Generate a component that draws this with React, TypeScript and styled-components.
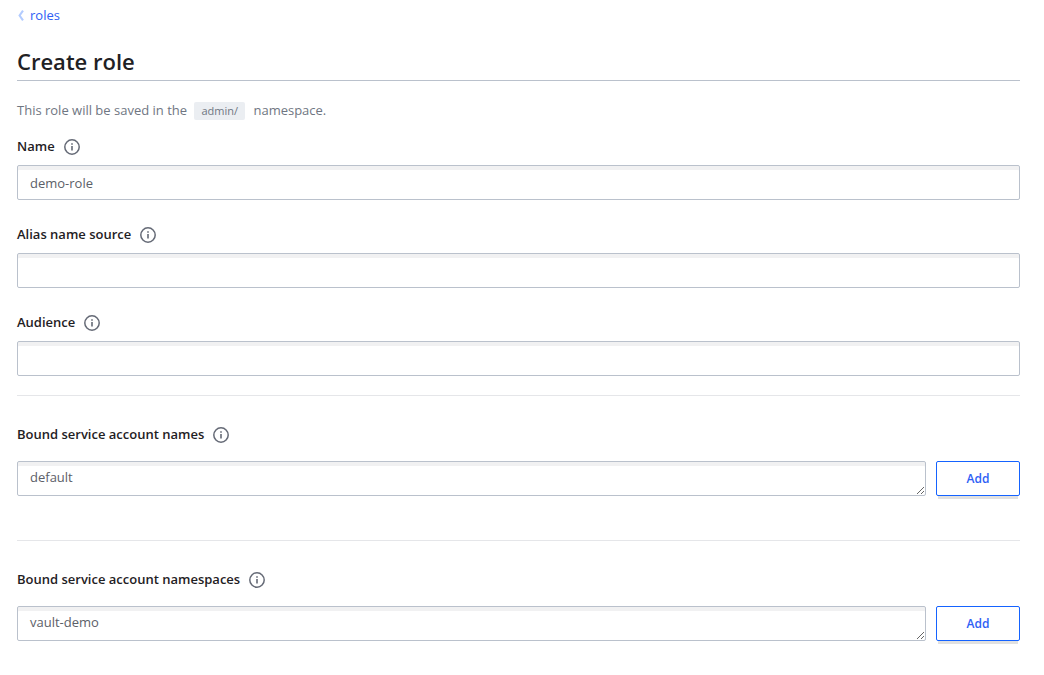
import React, { useId } from "react";
import styled, { createGlobalStyle } from "styled-components";

const GlobalStyle = createGlobalStyle`
  *, *::before, *::after { box-sizing: border-box; }
  body {
    margin: 0;
    background: #fff;
    color: #1f2124;
    font-family: "Open Sans", "Noto Sans", sans-serif;
    font-size: 13px;
    line-height: 20px;
  }
`;

const Page = styled.main`
  padding: 5px 24px 0 17px;
`;

const Breadcrumb = styled.nav`
  display: flex;
  height: 20px;
`;

const BackLink = styled.a`
  display: inline-flex;
  align-items: center;
  gap: 5px;
  color: #2e60f5;
  text-decoration: none;
`;

const Title = styled.h1`
  margin: 20px 0 0;
  padding-bottom: 3px;
  border-bottom: 1px solid #bac1cc;
  font-size: 22px;
  font-weight: 600;
  line-height: 32px;
`;

const Note = styled.p`
  margin: 19px 0 16px;
  color: #6f7682;
`;

const Code = styled.code`
  display: inline-block;
  margin: 0 5px 0 4px;
  padding: 0 7px;
  border-radius: 2px;
  background: #ebeef2;
  font-family: inherit;
  font-size: 11px;
  line-height: 18px;
`;

const Field = styled.div`
  margin-bottom: 24px;

  &:last-child {
    margin-bottom: 19px;
  }
`;

const LabelRow = styled.div<{ $gap: number }>`
  display: flex;
  align-items: center;
  gap: 9px;
  height: 20px;
  margin-bottom: ${(p) => p.$gap}px;
`;

const Label = styled.label`
  font-weight: 600;
`;

const InfoButton = styled.button`
  display: flex;
  padding: 1px 0 0;
  border: 0;
  background: none;
  color: #656a76;
`;

const controlStyle = `
  display: block;
  width: 100%;
  height: 35px;
  border: 1px solid #bac1cc;
  border-radius: 2px;
  background: #fff;
  box-shadow: inset 0 4px 0 #f1f1f2;
  color: #5c6068;
  font: inherit;
`;

const Input = styled.input`
  ${controlStyle}
  padding: 0 12px;
`;

const TextArea = styled.textarea`
  ${controlStyle}
  flex: 1;
  min-width: 0;
  min-height: 35px;
  padding: 5px 12px;
  overflow: hidden;
  resize: vertical;
`;

const Section = styled.section`
  padding: 28px 0 44px;
  border-top: 1px solid #e5e6e9;

  &:last-child {
    padding-bottom: 24px;
  }
`;

const EntryRow = styled.div`
  display: flex;
  gap: 10px;
`;

const AddButton = styled.button`
  flex: none;
  width: 84px;
  height: 35px;
  padding: 0;
  border: 1px solid #1563ff;
  border-radius: 2px;
  background: #fff;
  box-shadow: 0 5px 0 -2px #e1e1e1;
  color: #2e60f5;
  font: inherit;
  font-size: 12px;
  font-weight: 600;
`;

function InfoTip({ about }: { about: string }) {
  return (
    <InfoButton type="button" aria-label={about}>
      <svg width="16" height="16" viewBox="0 0 16 16" fill="none" aria-hidden="true">
        <circle cx="8" cy="8" r="7.2" stroke="currentColor" strokeWidth="1.5" />
        <path d="M8 7v4.5M8 4.2v1.6" stroke="currentColor" strokeWidth="1.6" />
      </svg>
    </InfoButton>
  );
}

function TextField({ label, value }: { label: string; value?: string }) {
  const id = useId();
  return (
    <Field>
      <LabelRow $gap={9}>
        <Label htmlFor={id}>{label}</Label>
        <InfoTip about={label + " help"} />
      </LabelRow>
      <Input id={id} defaultValue={value} />
    </Field>
  );
}

function ListField({ label, value }: { label: string; value: string }) {
  const id = useId();
  return (
    <Section>
      <LabelRow $gap={17}>
        <Label htmlFor={id}>{label}</Label>
        <InfoTip about={label + " help"} />
      </LabelRow>
      <EntryRow>
        <TextArea id={id} rows={1} defaultValue={value} />
        <AddButton type="button">Add</AddButton>
      </EntryRow>
    </Section>
  );
}

export default function App() {
  return (
    <Page>
      <GlobalStyle />
      <Breadcrumb>
        <BackLink href="#roles">
          <svg width="8" height="12" viewBox="0 0 8 12" fill="none" aria-hidden="true">
            <path d="M6 1.6 2.6 6.5 6 11.4" stroke="#b3ccff" strokeWidth="2.1" />
          </svg>
          roles
        </BackLink>
      </Breadcrumb>
      <Title>Create role</Title>
      <Note>
        This role will be saved in the <Code>admin/</Code> namespace.
      </Note>
      <form>
        <div>
          <TextField label="Name" value="demo-role" />
          <TextField label="Alias name source" />
          <TextField label="Audience" />
        </div>
        <ListField label="Bound service account names" value="default" />
        <ListField label="Bound service account namespaces" value="vault-demo" />
      </form>
    </Page>
  );
}
